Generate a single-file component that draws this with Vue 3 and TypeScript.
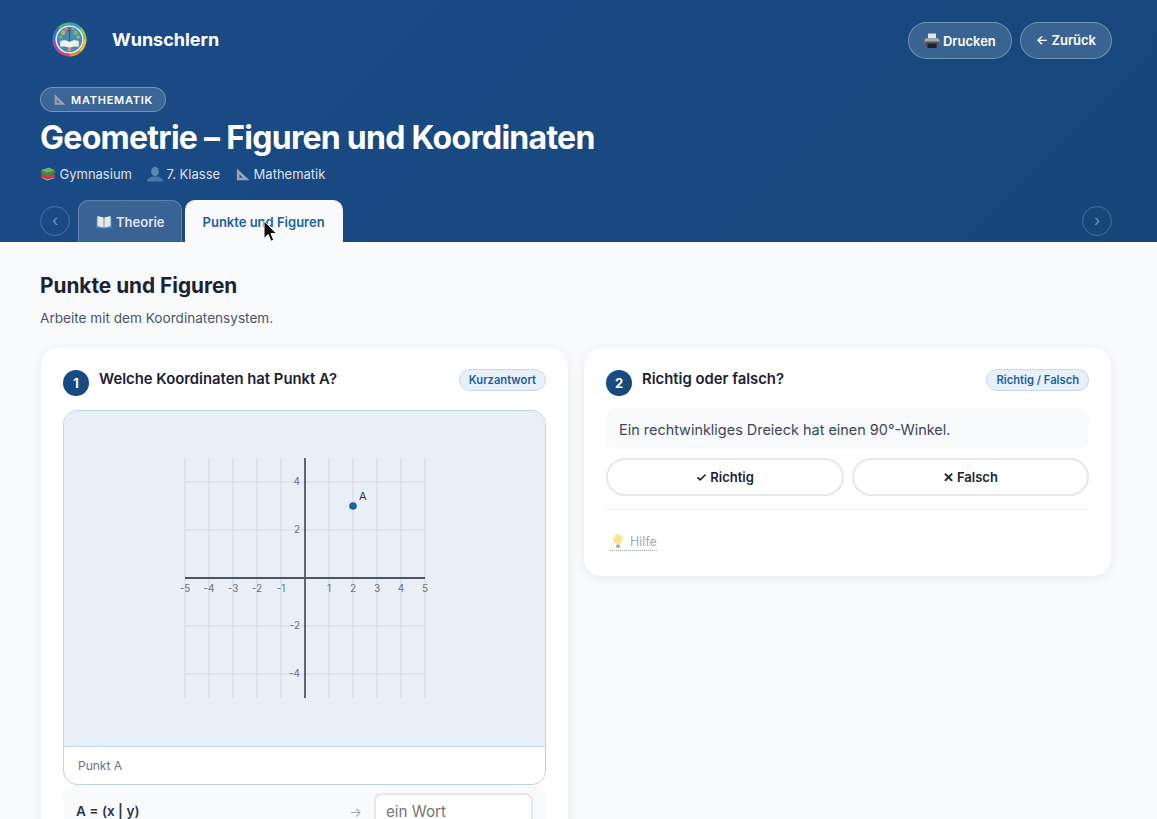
<script setup lang="ts">
const span = [-5, -4, -3, -2, -1, 1, 2, 3, 4, 5];
const evenY = [-4, -2, 2, 4];
const unit = 24;
const cx = 140;
const cy = 130;

const px = (v: number) => cx + v * unit;
const py = (v: number) => cy - v * unit;

// rainbow ring of the logo, clockwise from the top
const ringColors = ["#34a7b8", "#8cc152", "#f0c02e", "#ef8a2a", "#d9436f", "#9a4fb0", "#3f6fc4", "#46b37a"];
const ringArcs = ringColors.map((color, i) => {
  const r = 16;
  const a0 = (i * 45 - 90) * (Math.PI / 180);
  const a1 = ((i + 1) * 45 - 90 + 2) * (Math.PI / 180);
  const d = `M${18 + r * Math.cos(a0)} ${18 + r * Math.sin(a0)}A${r} ${r} 0 0 1 ${18 + r * Math.cos(a1)} ${18 + r * Math.sin(a1)}`;
  return { color, d };
});
</script>

<template>
  <div class="page">
    <header class="hero">
      <div class="topbar">
        <div class="brand">
          <svg class="logo" viewBox="0 0 36 36" aria-hidden="true">
            <path v-for="arc in ringArcs" :key="arc.color" :d="arc.d" :stroke="arc.color" stroke-width="3" fill="none" />
            <circle cx="18" cy="18" r="14.500" fill="#eef4f7" />
            <circle cx="18" cy="18" r="13" fill="#3c8fc0" />
            <path d="M17.300 21V10l-3-3 .6-.5 2.600 2.500V5.500h1V9l2.600-2.500.6.5-3 3v11z" fill="#7a5238" />
            <circle cx="11.500" cy="11" r="2.400" fill="#d9a441" />
            <circle cx="24.500" cy="11" r="2.400" fill="#74b56c" />
            <circle cx="14.500" cy="7.500" r="1.500" fill="#e58a4a" />
            <circle cx="21.500" cy="7.500" r="1.500" fill="#c77aa8" />
            <circle cx="9" cy="15.500" r="1.700" fill="#74b56c" />
            <circle cx="27" cy="15.500" r="1.700" fill="#e0a14a" />
            <path d="M8.500 19.500c3.500-1.200 6.500-.8 9.500 1 3-1.800 6-2.200 9.500-1v6c-3.500-.8-6.500-.4-9.500 1.200-3-1.600-6-2-9.500-1.200z" fill="#f8f1e4" />
            <circle cx="18" cy="28.500" r="2" fill="#e58a8a" />
          </svg>
          <span class="brand-name">Wunschlern</span>
        </div>
        <div class="actions">
          <button class="pill-btn" type="button">
            <svg class="emoji" viewBox="0 0 16 16" aria-hidden="true">
              <rect x="4" y="0.500" width="8" height="5" fill="#e8e6e4" />
              <path d="M.5 8q0-3 3-3h9q3 0 3 3v4H.5z" fill="#a3a7ad" />
              <rect x=".5" y="8.500" width="15" height="4.500" rx="1" fill="#50545b" />
              <rect x="3.500" y="10.500" width="9" height="4.500" fill="#1f2226" />
            </svg>
            Drucken
          </button>
          <button class="pill-btn pill-plain" type="button">← Zurück</button>
        </div>
      </div>

      <div class="subject-tag">
        <svg class="ruler ruler-sm" viewBox="0 0 16 16" aria-hidden="true">
          <path d="M2 1.500V14.500h13.500z M4.600 8V12h4z" fill="#98a2b5" fill-rule="evenodd" />
        </svg>
        MATHEMATIK
      </div>
      <h1>Geometrie – Figuren und Koordinaten</h1>
      <div class="meta">
        <span class="meta-item">
          <svg class="emoji" viewBox="0 0 16 16" aria-hidden="true">
            <path d="M1 11.500l8-2 6 2.500-8 2.500z" fill="#b5bac2" />
            <path d="M1 8.500l8-2 6 2.500v2.500l-8 2-6-2.500z" fill="#c9383c" />
            <path d="M1 4l8-2.500 6 3-8 2.500z" fill="#6cb45f" />
            <path d="M1 4l6 3 8-2.500v3l-8 2.500-6-3z" fill="#3f8a46" />
          </svg>
          Gymnasium
        </span>
        <span class="meta-item">
          <svg class="emoji" viewBox="0 0 16 16" aria-hidden="true">
            <ellipse cx="8" cy="5.500" rx="3.800" ry="4.700" fill="#5a88b2" />
            <path d="M0 15.500c0-3.500 3.500-5 8-5s8 1.500 8 5z" fill="#4b79a6" />
          </svg>
          7. Klasse
        </span>
        <span class="meta-item">
          <svg class="ruler" viewBox="0 0 16 16" aria-hidden="true">
            <path d="M2 1.500V14h13.500z M4.800 8V11.500h3.500z" fill="#98a2b5" fill-rule="evenodd" />
          </svg>
          Mathematik
        </span>
      </div>

      <nav class="tabs">
        <button class="round-nav" type="button">‹</button>
        <div class="tab-list">
          <button class="tab" type="button">
            <svg class="emoji" viewBox="0 0 16 16" aria-hidden="true">
              <path d="M.5 3l7.500 1 7.500-1v10.500l-7.500 1-7.500-1z" fill="#5f8fb4" />
              <path d="M1.500 2l6 1.500v10l-6-1.500zM14.500 2l-6 1.500v10l6-1.500z" fill="#e8eaea" />
            </svg>
            Theorie
          </button>
          <button class="tab tab-active" type="button">Punkte und Figuren</button>
        </div>
        <button class="round-nav" type="button">›</button>
      </nav>

      <svg class="cursor" viewBox="0 0 16 26" aria-hidden="true">
        <path d="M1 1v19l4.500-4.300 3 7.300 3-1.300-3-7h6z" fill="#111" stroke="#fff" stroke-width="1" />
      </svg>
    </header>

    <main class="content">
      <h2>Punkte und Figuren</h2>
      <p class="lead">Arbeite mit dem Koordinatensystem.</p>

      <div class="cards">
        <section class="card">
          <div class="q-head">
            <span class="q-num">1</span>
            <h3>Welche Koordinaten hat Punkt A?</h3>
            <span class="q-type">Kurzantwort</span>
          </div>
          <figure class="figure">
            <div class="plot">
              <svg class="chart" width="280" height="260" viewBox="0 0 280 260" aria-hidden="true">
                <line v-for="v in span" :key="'v' + v" class="grid" :x1="px(v)" :x2="px(v)" :y1="py(5)" :y2="py(-5)" />
                <line v-for="v in evenY" :key="'h' + v" class="grid" :x1="px(-5)" :x2="px(5)" :y1="py(v)" :y2="py(v)" />
                <line class="axis" :x1="px(-5)" :x2="px(5)" :y1="cy" :y2="cy" />
                <line class="axis" :x1="cx" :x2="cx" :y1="py(5)" :y2="py(-5)" />
                <text v-for="v in span" :key="'xl' + v" class="tick" :x="px(v)" :y="cy + 14" text-anchor="middle">{{ v }}</text>
                <text v-for="v in evenY" :key="'yl' + v" class="tick" :x="cx - 5" :y="py(v) + 3" text-anchor="end">{{ v }}</text>
                <circle :cx="px(2)" :cy="py(3)" r="3.800" fill="#1e5fa3" />
                <text class="point-label" :x="px(2) + 6" :y="py(3) - 6">A</text>
              </svg>
            </div>
            <figcaption>Punkt A</figcaption>
          </figure>
          <div class="answer-row">
            <label>A = (x | y)</label>
            <span class="arrow">→</span>
            <input class="word-input" type="text" placeholder="ein Wort" />
          </div>
        </section>

        <section class="card card-short">
          <div class="q-head">
            <span class="q-num">2</span>
            <h3>Richtig oder falsch?</h3>
            <span class="q-type">Richtig / Falsch</span>
          </div>
          <p class="statement">Ein rechtwinkliges Dreieck hat einen 90°-Winkel.</p>
          <div class="tf-row">
            <button class="tf-btn" type="button">✓ Richtig</button>
            <button class="tf-btn" type="button">✕ Falsch</button>
          </div>
          <div class="hint">
            <span class="hint-link">
              <svg class="bulb" viewBox="0 0 14 18" aria-hidden="true">
                <path d="M7 1a5.500 5.500 0 0 0-3.200 10c.8.700 1 1.300 1.200 2.500h4c.2-1.200.4-1.800 1.200-2.500A5.500 5.500 0 0 0 7 1z" fill="#fbe58c" />
                <path d="M5.500 3.500a3 3 0 0 0-1.500 3" stroke="#fff8d8" stroke-width="1.200" fill="none" />
                <rect x="5" y="13.500" width="4" height="3.500" rx="1" fill="#9b9ea3" />
              </svg>
              Hilfe
            </span>
          </div>
        </section>
      </div>
    </main>
  </div>
</template>

<style>
html,
body {
  margin: 0;
  height: 100%;
  overflow: hidden;
  background: #f8fafc;
}
</style>

<style scoped>
.page {
  font-family: Inter, "Liberation Sans", sans-serif;
  color: #1a2233;
}

.hero {
  position: relative;
  box-sizing: border-box;
  height: 242px;
  padding: 22px 45px 0 40px;
  background: linear-gradient(135deg, #1b4b87 0%, #16477b 100%);
  color: #fff;
}

.topbar {
  display: flex;
  align-items: center;
  justify-content: space-between;
  height: 37px;
}

.brand {
  display: flex;
  align-items: center;
  gap: 25px;
  padding: 0 0 2px 12px;
}

.logo {
  width: 35px;
  height: 35px;
}

.brand-name {
  font-size: 18px;
  font-weight: 700;
}

.actions {
  display: flex;
  gap: 8px;
}

.pill-btn {
  display: flex;
  align-items: center;
  gap: 3px;
  height: 37px;
  padding: 0 15px;
  border: 1px solid rgba(255, 255, 255, 0.3);
  border-radius: 19px;
  background: rgba(255, 255, 255, 0.15);
  color: #fff;
  font: 600 13px Inter, "Liberation Sans", sans-serif;
}

.pill-plain {
  padding-bottom: 2px;
}

.emoji {
  width: 16px;
  height: 16px;
  flex: none;
}

.subject-tag {
  display: inline-flex;
  align-items: center;
  gap: 5px;
  box-sizing: border-box;
  height: 25px;
  margin-top: 28px;
  padding: 0 12px;
  border: 1px solid rgba(255, 255, 255, 0.3);
  border-radius: 13px;
  background: rgba(255, 255, 255, 0.15);
  font-size: 11px;
  font-weight: 600;
  letter-spacing: 0.75px;
}

.ruler {
  width: 15px;
  height: 15px;
  flex: none;
}

.ruler-sm {
  width: 13px;
  height: 13px;
}

h1 {
  margin: 8px 0 0;
  font-size: 32px;
  line-height: 36px;
  font-weight: 700;
  letter-spacing: -0.72px;
}

.meta {
  display: flex;
  gap: 15px;
  margin-top: 8px;
  font-size: 13px;
  line-height: 20px;
  color: rgba(255, 255, 255, 0.85);
}

.meta-item {
  display: flex;
  align-items: center;
  gap: 3.5px;
}

.tabs {
  position: absolute;
  left: 40px;
  right: 45px;
  bottom: 0;
  display: flex;
  align-items: flex-end;
  justify-content: space-between;
}

.tab-list {
  display: flex;
  gap: 3px;
  flex: 1;
  margin-left: 8px;
}

.round-nav {
  align-self: flex-start;
  margin-top: 6px;
  box-sizing: border-box;
  width: 30px;
  height: 30px;
  padding: 0 0 3px;
  border: 1px solid rgba(255, 255, 255, 0.2);
  border-radius: 50%;
  background: transparent;
  color: rgba(255, 255, 255, 0.4);
  font: 400 16px Inter, "Liberation Sans", sans-serif;
}

.tab {
  display: flex;
  align-items: center;
  gap: 4px;
  box-sizing: border-box;
  height: 42px;
  padding: 0 16px 0 17px;
  border: 1px solid rgba(255, 255, 255, 0.2);
  border-bottom: 0;
  border-radius: 10px 10px 0 0;
  background: rgba(255, 255, 255, 0.14);
  color: rgba(255, 255, 255, 0.85);
  font: 600 13px Inter, "Liberation Sans", sans-serif;
}

.tab-active {
  padding: 0 17px;
  border-color: #f8fafc;
  background: #f8fafc;
  color: #1e5fa3;
}

.cursor {
  position: absolute;
  left: 263px;
  top: 220px;
  width: 15px;
  height: 24px;
  z-index: 2;
}

.content {
  padding: 32px 45px 0 40px;
}

h2 {
  margin: 0;
  font-size: 20.8px;
  line-height: 24px;
  font-weight: 700;
}

.lead {
  margin: 10px 0 0;
  font-size: 13.6px;
  line-height: 20px;
  color: #4a5568;
}

.cards {
  display: grid;
  grid-template-columns: 1fr 1fr;
  gap: 16px;
  align-items: start;
  margin-top: 20px;
  padding: 0 1px;
}

.card {
  box-sizing: border-box;
  padding: 20px 22px;
  border-radius: 18px;
  background: #fff;
  box-shadow: 0 2px 12px rgba(20, 40, 80, 0.07);
}

.q-head {
  display: flex;
  align-items: flex-start;
  gap: 10px;
}

.q-num {
  display: flex;
  flex: none;
  align-items: center;
  justify-content: center;
  width: 26px;
  height: 26px;
  margin-top: 2px;
  border-radius: 50%;
  background: linear-gradient(135deg, #1b4b87, #16477b);
  color: #fff;
  font-size: 13px;
  font-weight: 700;
}

h3 {
  flex: 1;
  margin: 0;
  font-size: 14.85px;
  line-height: 23px;
  font-weight: 600;
  color: #1a2233;
}

.q-type {
  flex: none;
  box-sizing: border-box;
  height: 22px;
  margin-top: 1px;
  padding: 0 9px;
  border: 1px solid #c5d9ed;
  border-radius: 11px;
  background: #e8f1fa;
  color: #1e5fa3;
  font-size: 11.2px;
  font-weight: 600;
  line-height: 20px;
}

.figure {
  margin: 14px 0 0;
  overflow: hidden;
  border: 1px solid #bed3e8;
  border-radius: 14px;
  background: #fff;
}

.plot {
  display: flex;
  justify-content: center;
  padding: 37px 0 38px;
  background: #e8eff6;
  border-bottom: 1px solid #c5d9ed;
}

.chart {
  display: block;
}

.grid {
  stroke: #d9dfe7;
  stroke-width: 1.5;
}

.axis {
  stroke: #4d5764;
  stroke-width: 1.8;
}

.tick {
  font-size: 10px;
  fill: #6b7280;
}

.point-label {
  font-size: 11px;
  fill: #2a3342;
}

figcaption {
  padding: 11px 14px;
  font-size: 12px;
  line-height: 15px;
  color: #6b7280;
}

.answer-row {
  display: flex;
  align-items: center;
  gap: 12px;
  padding: 8px 13px;
  border-radius: 12px;
  background: #f8fafc;
}

.answer-row label {
  flex: 1;
  padding-bottom: 2px;
  font-size: 13.6px;
  font-weight: 600;
  color: #2d3748;
}

.arrow {
  color: #a0a7b3;
  font-size: 13px;
}

.word-input {
  box-sizing: border-box;
  width: 159px;
  height: 38px;
  padding: 0 10px 2px;
  border: 2px solid #e5e7eb;
  border-radius: 8px;
  background: #fff;
  font: 400 15.2px Inter, "Liberation Sans", sans-serif;
}

.word-input::placeholder {
  color: #757575;
}

.statement {
  margin: 12px 0 0;
  padding: 11px 13px 9px;
  border-radius: 12px;
  background: #f8fafc;
  font-size: 14.45px;
  line-height: 21.6px;
  color: #3c4657;
}

.tf-row {
  display: grid;
  grid-template-columns: 1fr 1fr;
  gap: 8px;
  margin-top: 8px;
}

.tf-btn {
  box-sizing: border-box;
  height: 38px;
  border: 2px solid #e5e7eb;
  border-radius: 19px;
  background: #fff;
  color: #1a2233;
  font: 600 13px Inter, "Liberation Sans", sans-serif;
}

.hint {
  margin-top: 13px;
  padding: 23px 0 3px;
  border-top: 1px solid #eef0f3;
}

.hint-link {
  display: inline-flex;
  align-items: center;
  gap: 6px;
  margin-left: 4px;
  padding: 0 0 0 2px;
  border-bottom: 1px dotted #9aa1ad;
  font-size: 12.500px;
  line-height: 17px;
  color: #a5abb8;
}

.bulb {
  width: 12px;
  height: 16px;
}
</style>
